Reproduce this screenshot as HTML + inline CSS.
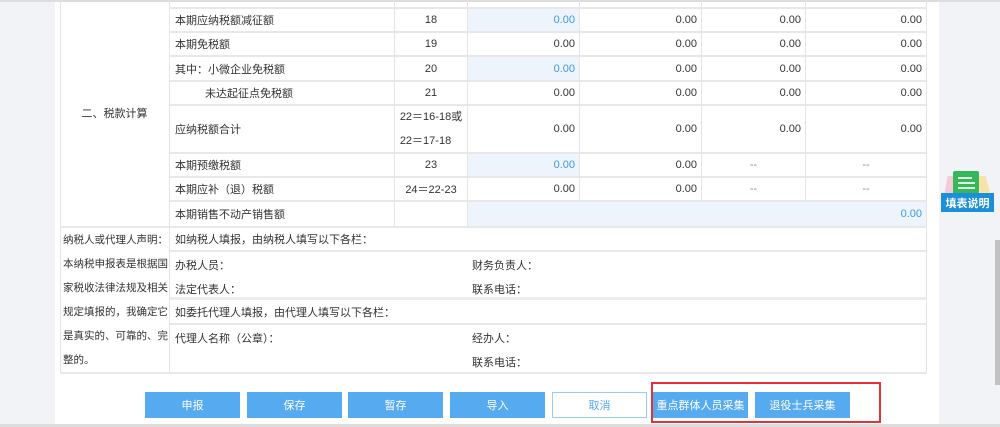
<!DOCTYPE html>
<html><head><meta charset="utf-8"><style>
*{margin:0;padding:0;box-sizing:border-box}
body{width:1000px;height:427px;overflow:hidden;background:#f2f3f7;position:relative;font-family:"Liberation Sans","Noto Sans CJK SC",sans-serif;font-size:11px;color:#333}
.panel{position:absolute;left:55px;top:0;width:884px;height:424px;background:#fff}
.c{position:absolute;border-right:1px solid #e4e4e4;border-bottom:2px solid #e8e8e8;display:flex;align-items:center;white-space:nowrap}
.l{padding-left:5px}
.m{justify-content:center}
.r{justify-content:flex-end;padding-right:4px}
.b{background:#eef4fc}
.bt{color:#3a9be0}
.btn{position:absolute;top:392px;width:95px;height:26px;background:#56aaf0;color:#fff;display:flex;align-items:center;justify-content:center;font-size:11px}
</style></head><body>
<div class="panel"></div>
<div style="position:absolute;left:0;top:0;width:1000px;height:2px;background:#ddd"></div>
<div style="position:absolute;left:0;top:424px;width:1000px;height:3px;background:#ddd"></div>
<div style="position:absolute;left:60px;top:0;width:1px;height:374px;background:#e4e4e4"></div>
<div class="c m" style="left:60px;top:0;width:110px;height:228px">二、税款计算</div>
<div class="c" style="left:170px;top:0;width:225px;height:9px"></div>
<div class="c" style="left:395px;top:0;width:73px;height:9px"></div>
<div class="c" style="left:468px;top:0;width:112px;height:9px"></div>
<div class="c" style="left:580px;top:0;width:122px;height:9px"></div>
<div class="c" style="left:702px;top:0;width:104px;height:9px"></div>
<div class="c" style="left:806px;top:0;width:121px;height:9px"></div>

<div class="c l" style="left:170px;top:9px;width:225px;height:24px">本期应纳税额减征额</div>
<div class="c m" style="left:395px;top:9px;width:73px;height:24px">18</div>
<div class="c r b bt" style="left:468px;top:9px;width:112px;height:24px">0.00</div>
<div class="c r" style="left:580px;top:9px;width:122px;height:24px">0.00</div>
<div class="c r" style="left:702px;top:9px;width:104px;height:24px">0.00</div>
<div class="c r" style="left:806px;top:9px;width:121px;height:24px">0.00</div>

<div class="c l" style="left:170px;top:33px;width:225px;height:24px">本期免税额</div>
<div class="c m" style="left:395px;top:33px;width:73px;height:24px">19</div>
<div class="c r" style="left:468px;top:33px;width:112px;height:24px">0.00</div>
<div class="c r" style="left:580px;top:33px;width:122px;height:24px">0.00</div>
<div class="c r" style="left:702px;top:33px;width:104px;height:24px">0.00</div>
<div class="c r" style="left:806px;top:33px;width:121px;height:24px">0.00</div>

<div class="c l" style="left:170px;top:57px;width:225px;height:25px">其中：小微企业免税额</div>
<div class="c m" style="left:395px;top:57px;width:73px;height:25px">20</div>
<div class="c r b bt" style="left:468px;top:57px;width:112px;height:25px">0.00</div>
<div class="c r" style="left:580px;top:57px;width:122px;height:25px">0.00</div>
<div class="c r" style="left:702px;top:57px;width:104px;height:25px">0.00</div>
<div class="c r" style="left:806px;top:57px;width:121px;height:25px">0.00</div>

<div class="c l" style="left:170px;top:82px;width:225px;height:24px;padding-left:35px">未达起征点免税额</div>
<div class="c m" style="left:395px;top:82px;width:73px;height:24px">21</div>
<div class="c r" style="left:468px;top:82px;width:112px;height:24px">0.00</div>
<div class="c r" style="left:580px;top:82px;width:122px;height:24px">0.00</div>
<div class="c r" style="left:702px;top:82px;width:104px;height:24px">0.00</div>
<div class="c r" style="left:806px;top:82px;width:121px;height:24px">0.00</div>

<div class="c l" style="left:170px;top:106px;width:225px;height:48px">应纳税额合计</div>
<div class="c m" style="left:395px;top:106px;width:73px;height:48px;flex-direction:column;line-height:24px;font-size:11px">22＝16-18或<br>22＝17-18</div>
<div class="c r" style="left:468px;top:106px;width:112px;height:48px">0.00</div>
<div class="c r" style="left:580px;top:106px;width:122px;height:48px">0.00</div>
<div class="c r" style="left:702px;top:106px;width:104px;height:48px">0.00</div>
<div class="c r" style="left:806px;top:106px;width:121px;height:48px">0.00</div>

<div class="c l" style="left:170px;top:154px;width:225px;height:24px">本期预缴税额</div>
<div class="c m" style="left:395px;top:154px;width:73px;height:24px">23</div>
<div class="c r b bt" style="left:468px;top:154px;width:112px;height:24px">0.00</div>
<div class="c r" style="left:580px;top:154px;width:122px;height:24px">0.00</div>
<div class="c m" style="left:702px;top:154px;width:104px;height:24px;color:#888">--</div>
<div class="c m" style="left:806px;top:154px;width:121px;height:24px;color:#888">--</div>

<div class="c l" style="left:170px;top:178px;width:225px;height:24px">本期应补（退）税额</div>
<div class="c m" style="left:395px;top:178px;width:73px;height:24px">24＝22-23</div>
<div class="c r" style="left:468px;top:178px;width:112px;height:24px">0.00</div>
<div class="c r" style="left:580px;top:178px;width:122px;height:24px">0.00</div>
<div class="c m" style="left:702px;top:178px;width:104px;height:24px;color:#888">--</div>
<div class="c m" style="left:806px;top:178px;width:121px;height:24px;color:#888">--</div>

<div class="c l" style="left:170px;top:202px;width:225px;height:26px">本期销售不动产销售额</div>
<div class="c" style="left:395px;top:202px;width:73px;height:26px"></div>
<div class="c r b bt" style="left:468px;top:202px;width:459px;height:26px">0.00</div>

<div class="c" style="left:60px;top:228px;width:110px;height:146px;align-items:flex-start;padding-left:3px;line-height:24px;font-size:10.5px">纳税人或代理人声明：<br>本纳税申报表是根据国<br>家税收法律法规及相关<br>规定填报的，我确定它<br>是真实的、可靠的、完<br>整的。</div>
<div class="c l" style="left:170px;top:228px;width:757px;height:24px">如纳税人填报，由纳税人填写以下各栏：</div>
<div class="c" style="left:170px;top:252px;width:757px;height:48px;border-bottom:3px solid #ececec"></div>
<div style="position:absolute;left:175px;top:257px">办税人员：</div>
<div style="position:absolute;left:472px;top:257px">财务负责人：</div>
<div style="position:absolute;left:175px;top:281px">法定代表人：</div>
<div style="position:absolute;left:472px;top:281px">联系电话：</div>
<div class="c l" style="left:170px;top:300px;width:757px;height:25px">如委托代理人填报，由代理人填写以下各栏：</div>
<div class="c" style="left:170px;top:325px;width:757px;height:49px"></div>
<div style="position:absolute;left:175px;top:330px">代理人名称（公章）：</div>
<div style="position:absolute;left:472px;top:330px">经办人：</div>
<div style="position:absolute;left:472px;top:354px">联系电话：</div>

<div class="btn" style="left:145px">申报</div>
<div class="btn" style="left:247px">保存</div>
<div class="btn" style="left:348px">暂存</div>
<div class="btn" style="left:450px">导入</div>
<div class="btn" style="left:552px;background:#fff;border:1px solid #9ccaf2;color:#56aaf0">取消</div>
<div class="btn" style="left:653px">重点群体人员采集</div>
<div class="btn" style="left:755px">退役士兵采集</div>
<div style="position:absolute;left:651px;top:382px;width:230px;height:41px;border:2px solid #e8303a"></div>

<div style="position:absolute;left:946px;top:176px;width:14px;height:18px;background:#f6c9d8;transform:skewX(-10deg)"></div>
<div style="position:absolute;left:978px;top:176px;width:10px;height:18px;background:#f8e3a6;transform:skewX(15deg)"></div>
<div style="position:absolute;left:953px;top:171px;width:26px;height:24px;background:#35b75a;border-radius:2px"></div>
<div style="position:absolute;left:958px;top:177px;width:14px;height:2px;background:#dff5e4"></div>
<div style="position:absolute;left:958px;top:182px;width:17px;height:2px;background:#dff5e4"></div>
<div style="position:absolute;left:958px;top:187px;width:17px;height:2px;background:#dff5e4"></div>
<div style="position:absolute;left:941px;top:193px;width:53px;height:19px;background:#1b8fd8;color:#fff;font-weight:bold;font-size:11px;display:flex;align-items:center;justify-content:center">填表说明</div>

<div style="position:absolute;left:995px;top:240px;width:5px;height:145px;background:#c1c1c1"></div>
</body></html>
